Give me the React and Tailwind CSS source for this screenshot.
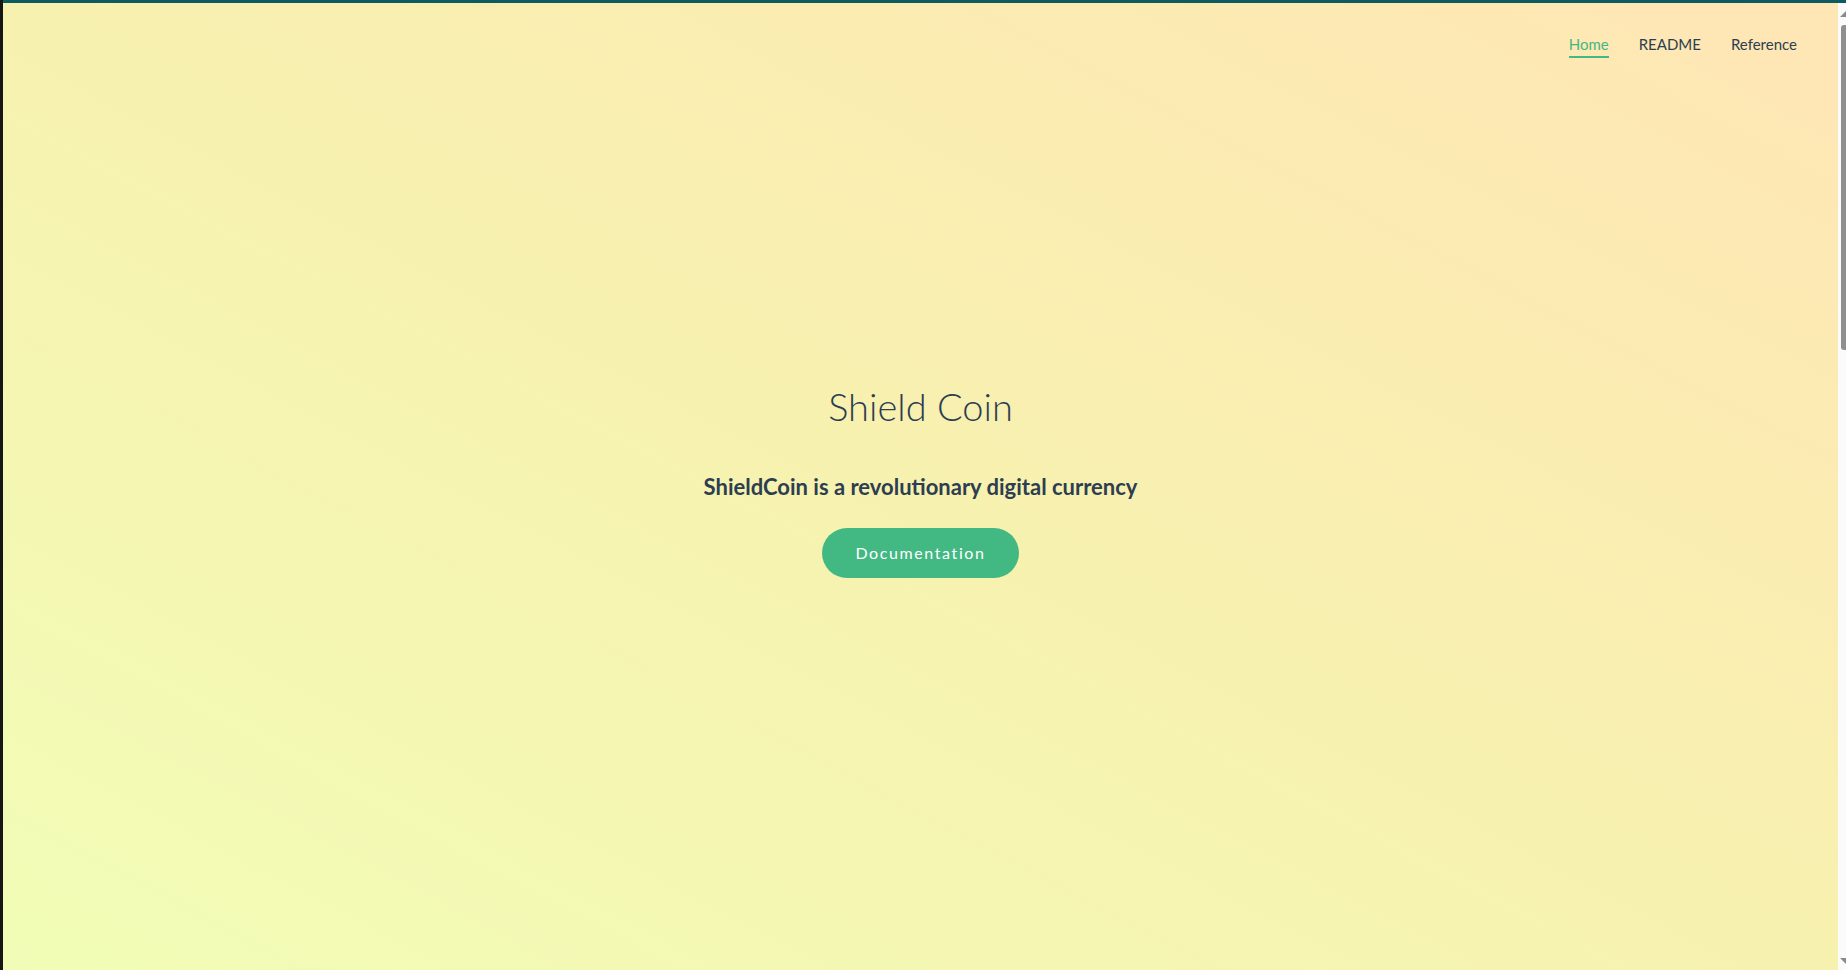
import React from 'react';

const navLinks = [
  { label: 'Home', active: true },
  { label: 'README', active: false },
  { label: 'Reference', active: false },
];

const Scrollbar = () => (
  <div className="w-[8px] h-full bg-[#fbfbfb] flex flex-col items-end">
    <svg width="6" height="6" viewBox="0 0 6 6" className="mt-[8px]">
      <polygon points="6,0 6,6 0,6" fill="#8a8a8a" />
    </svg>
    <div className="mt-[8px] w-[5px] h-[325px] bg-[#8f8f8f] rounded-l-[3px]" />
    <div className="flex-1" />
    <svg width="6" height="6" viewBox="0 0 6 6" className="mb-[6px]">
      <polygon points="0,0 6,0 6,6" fill="#8a8a8a" />
    </svg>
  </div>
);

const App = () => {
  return (
    <div className="flex w-full h-[970px] overflow-hidden font-['Lato','Open_Sans',sans-serif]">
      {/* window edge */}
      <div className="w-[3px] h-full bg-[#161616]" />

      <div className="flex-1 flex flex-col">
        <div className="h-[3px] bg-[#0d5b61]" />

        <div className="flex-1 flex">
          <main className="flex-1 flex flex-col bg-linear-to-tr from-[#f1fdb6] via-[#f7f1af] to-[#ffe6b5] text-[#2c3e50]">
            {/* top nav */}
            <nav className="flex justify-end items-center gap-[30px] pr-[41px] pt-[30px]">
              {navLinks.map((link) => (
                <a
                  key={link.label}
                  href="#"
                  className={
                    link.active
                      ? 'text-[15px] leading-[22px] text-[#42b883] border-b-2 border-[#42b883] pb-[1px]'
                      : 'text-[15px] leading-[22px] text-[#2c3e50] pb-[3px]'
                  }
                >
                  {link.label}
                </a>
              ))}
            </nav>

            {/* hero */}
            <section className="flex flex-col items-center mt-[324px]">
              <h1 className="text-[38px] leading-[48px] font-light text-[#2c3e50]">Shield Coin</h1>
              <p className="mt-[42px] text-[22px] leading-[30px] font-bold text-[#2c3e50]">
                ShieldCoin is a revolutionary digital currency
              </p>
              <button className="mt-[26px] w-[197px] h-[50px] rounded-full bg-[#42b883] text-white text-[16px] tracking-[0.1em]">
                Documentation
              </button>
            </section>
          </main>

          <Scrollbar />
        </div>
      </div>
    </div>
  );
};

export default App;
